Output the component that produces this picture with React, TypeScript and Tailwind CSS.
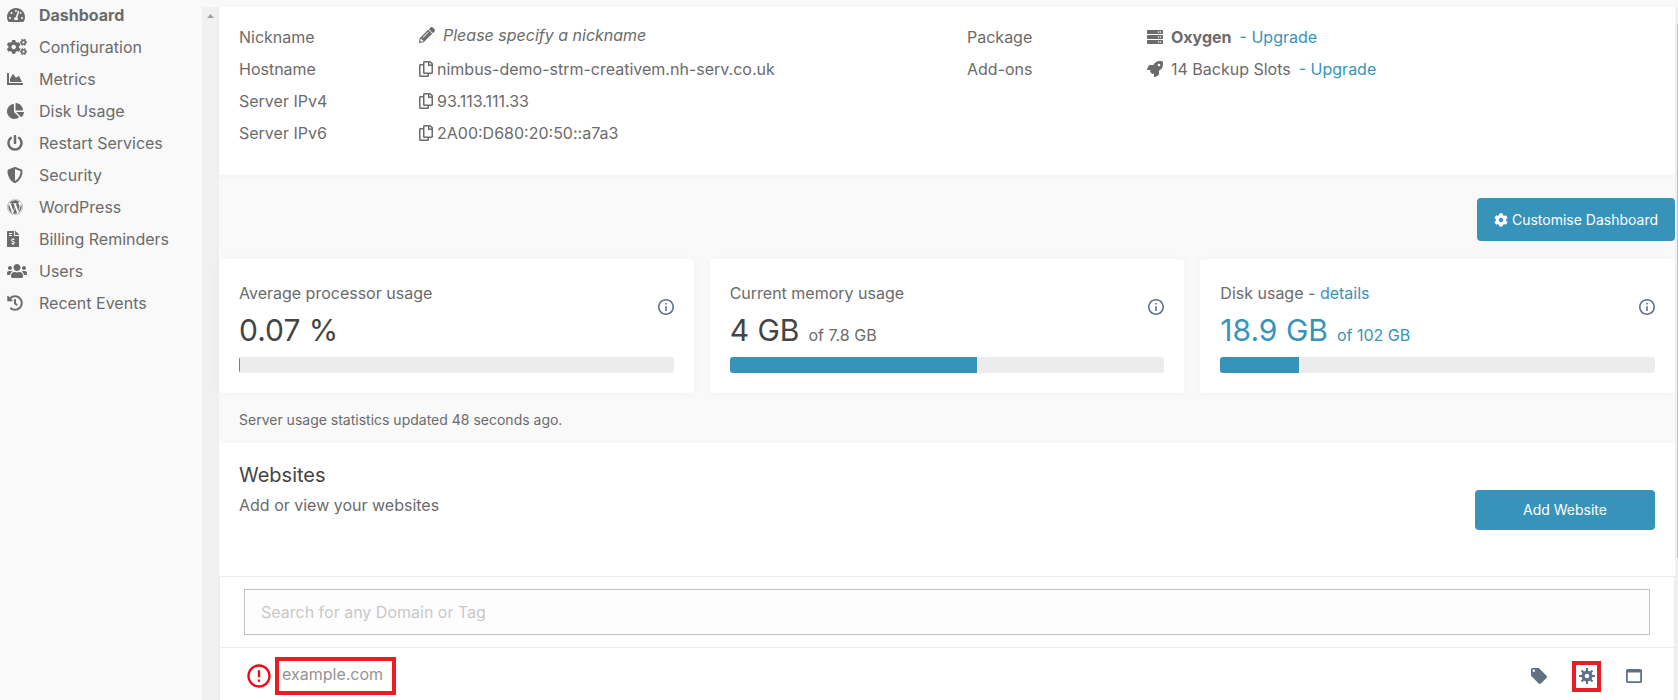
import type { ReactNode } from "react";
import type { IconType } from "react-icons";
import {
  FaChartArea,
  FaChartPie,
  FaCog,
  FaCogs,
  FaFileInvoiceDollar,
  FaHistory,
  FaPencilAlt,
  FaPowerOff,
  FaRegCopy,
  FaRocket,
  FaServer,
  FaShieldAlt,
  FaTachometerAlt,
  FaUsers,
  FaWordpress,
} from "react-icons/fa";
import { MdErrorOutline, MdInfoOutline, MdLocalOffer, MdWebAsset } from "react-icons/md";

const navItems: { label: string; icon: IconType; size: string; active?: boolean }[] = [
  { label: "Dashboard", icon: FaTachometerAlt, size: "w-[18px]", active: true },
  { label: "Configuration", icon: FaCogs, size: "w-5" },
  { label: "Metrics", icon: FaChartArea, size: "w-4" },
  { label: "Disk Usage", icon: FaChartPie, size: "w-[17px]" },
  { label: "Restart Services", icon: FaPowerOff, size: "w-4" },
  { label: "Security", icon: FaShieldAlt, size: "w-4" },
  { label: "WordPress", icon: FaWordpress, size: "w-4" },
  { label: "Billing Reminders", icon: FaFileInvoiceDollar, size: "w-3" },
  { label: "Users", icon: FaUsers, size: "w-5" },
  { label: "Recent Events", icon: FaHistory, size: "w-4" },
];

const hostDetails = [
  { label: "Hostname", value: "nimbus-demo-strm-creativem.nh-serv.co.uk" },
  { label: "Server IPv4", value: "93.113.111.33" },
  { label: "Server IPv6", value: "2A00:D680:20:50::a7a3" },
];

function Sidebar() {
  return (
    <nav className="w-[202px] shrink-0">
      <ul>
        {navItems.map(({ label, icon: Icon, size, active }) => (
          <li key={label}>
            <a href="#" className={`flex h-8 items-center pb-[2px] pl-[7px] ${active ? "font-bold" : ""}`}>
              <span className="w-8 shrink-0">
                <Icon className={`h-4 ${size}`} aria-hidden="true" />
              </span>
              {label}
            </a>
          </li>
        ))}
      </ul>
    </nav>
  );
}

function DetailRow({ label, children }: { label: string; children: ReactNode }) {
  return (
    <div className="flex h-8 items-center">
      <dt className="w-[180px] shrink-0">{label}</dt>
      <dd className="flex items-center">{children}</dd>
    </div>
  );
}

function UpgradeLink() {
  return (
    <a href="#" className="ml-2 text-[#3893bb]">
      - Upgrade
    </a>
  );
}

function ServerDetails() {
  return (
    <section className="grid grid-cols-2 bg-white pt-[14px] pb-[26px] shadow-[0_1px_4px_rgba(0,0,0,0.04)]">
      <dl className="pl-5">
        <DetailRow label="Nickname">
          <button type="button" className="flex items-center pb-1 italic">
            <FaPencilAlt className="mr-2 size-4" aria-hidden="true" />
            Please specify a nickname
          </button>
        </DetailRow>
        {hostDetails.map(({ label, value }) => (
          <DetailRow key={label} label={label}>
            <button type="button" aria-label={`Copy ${label}`} className="mr-1">
              <FaRegCopy className="h-4 w-[14px]" />
            </button>
            {value}
          </DetailRow>
        ))}
      </dl>
      <dl className="pl-5">
        <DetailRow label="Package">
          <FaServer className="mr-2 size-4" aria-hidden="true" />
          <strong className="font-bold">Oxygen</strong>
          <UpgradeLink />
        </DetailRow>
        <DetailRow label="Add-ons">
          <FaRocket className="mr-2 size-4" aria-hidden="true" />
          14 Backup Slots
          <UpgradeLink />
        </DetailRow>
      </dl>
    </section>
  );
}

type UsageCardProps = {
  title: ReactNode;
  name: string;
  value: string;
  total?: string;
  percent: number;
  highlight?: boolean;
};

function UsageCard({ title, name, value, total, percent, highlight }: UsageCardProps) {
  return (
    <section className="rounded bg-white px-5 pt-[22px] pb-5 shadow-[0_1px_8px_rgba(0,0,0,0.04)]">
      <div className="flex items-center justify-between">
        <div className={highlight ? "text-[#3893bb]" : ""}>
          <h2 className="h-6 leading-6 text-[#6b6b6b]">{title}</h2>
          <p className="flex h-[52px] items-baseline gap-[9px] leading-[50px]">
            <span className={`text-[30px] ${highlight ? "" : "text-[#444]"}`}>{value}</span>
            {total && <span>{total}</span>}
          </p>
        </div>
        <button type="button" aria-label={`About ${name}`} className="mb-6 text-[#5f7087]">
          <MdInfoOutline viewBox="2 2 20 20" className="size-4" />
        </button>
      </div>
      <div
        role="progressbar"
        aria-label={name}
        aria-valuenow={percent}
        className="h-4 overflow-hidden rounded-[3px] bg-[#ececec]"
      >
        <div className="h-full min-w-px bg-[#3893bb]" style={{ width: `${percent}%` }} />
      </div>
    </section>
  );
}

function GearIcon() {
  return (
    <svg viewBox="0 0 16 16" className="size-4" fill="none" stroke="currentColor" aria-hidden="true">
      <circle cx="8" cy="8" r="3.9" strokeWidth="3.2" />
      <path
        d="M8 0v3M8 13v3M0 8h3M13 8h3M2.5 2.5l2 2M11.5 11.5l2 2M2.5 13.5l2-2M11.5 4.5l2-2"
        strokeWidth="2.1"
      />
    </svg>
  );
}

function Websites() {
  return (
    <section className="flex grow flex-col bg-white shadow-[0_0_3px_rgba(0,0,0,0.04)]">
      <div className="flex h-[133px] items-start justify-between px-5 pt-[18px]">
        <div>
          <h2 className="text-xl leading-7 text-[#444]">Websites</h2>
          <p className="mt-1 leading-6">Add or view your websites</p>
        </div>
        <button
          type="button"
          className="mt-[29px] h-10 w-[180px] rounded bg-[#3893bb] text-sm text-white"
        >
          Add Website
        </button>
      </div>
      <div className="flex grow flex-col border border-b-0 border-[#ececec]">
        <div className="border-b border-[#ececec] px-6 py-3">
          <input
            type="text"
            aria-label="Search for any Domain or Tag"
            placeholder="Search for any Domain or Tag"
            className="block h-[46px] w-full border border-[#c2c2c2] bg-[#fdfdfd] px-4 placeholder:text-[#c8c8c8]"
          />
        </div>
        <div className="flex items-center justify-between pt-[9px] pr-8 pl-[25px]">
          <div className="flex items-center">
            <MdErrorOutline className="mr-[2px] size-7 text-[#f80012]" aria-label="Website has a problem" />
            <a
              href="#"
              className="flex h-[38px] w-[121px] items-center border-4 border-[#ed1c24] pb-1 pl-[3px] text-[#939393]"
            >
              example.com
            </a>
          </div>
          <div className="flex items-center gap-[25px] text-[#5f7087]">
            <button type="button" aria-label="Tags">
              <MdLocalOffer viewBox="2 2 20 20" className="size-4" />
            </button>
            <button
              type="button"
              aria-label="Settings"
              className="flex h-[31px] w-[29px] items-center justify-center border-4 border-[#ed1c24]"
            >
              <GearIcon />
            </button>
            <button type="button" aria-label="Open site">
              <MdWebAsset viewBox="3 3 18 18" className="size-4" />
            </button>
          </div>
        </div>
      </div>
    </section>
  );
}

export default function App() {
  return (
    <div className="flex h-screen overflow-hidden bg-[#f9f9f9] font-[Inter,sans-serif] text-base text-[#6b6b6b]">
      <Sidebar />

      {/* sidebar scroll track */}
      <div className="mt-[7px] flex w-[17px] shrink-0 justify-center bg-[#f0f0f0] pt-[7px]" aria-hidden="true">
        <svg viewBox="0 0 7 4" className="h-1 w-[7px]" fill="#a3a3a3">
          <path d="M3.5 0 7 4H0z" />
        </svg>
      </div>

      <main className="flex min-w-0 grow flex-col pt-[7px]">
        <ServerDetails />

        <div className="flex justify-end pt-[23px] pb-[18px]">
          <button
            type="button"
            className="flex h-[43px] w-[198px] items-center justify-center gap-1 rounded bg-[#3893bb] text-sm text-white"
          >
            <FaCog className="size-[14px]" aria-hidden="true" />
            Customise Dashboard
          </button>
        </div>

        <div className="grid grid-cols-3 gap-4">
          <UsageCard title="Average processor usage" name="Average processor usage" value="0.07 %" percent={0.07} />
          <UsageCard title="Current memory usage" name="Current memory usage" value="4 GB" total="of 7.8 GB" percent={57} />
          <UsageCard
            title={
              <>
                Disk usage -{" "}
                <a href="#" className="text-[#3893bb]">
                  details
                </a>
              </>
            }
            name="Disk usage"
            value="18.9 GB"
            total="of 102 GB"
            percent={18.2}
            highlight
          />
        </div>

        <p className="h-[50px] px-5 pt-[17px] text-sm leading-5">Server usage statistics updated 48 seconds ago.</p>

        <Websites />
      </main>

      {/* page scrollbar */}
      <div className="mt-[7px] flex w-[3px] shrink-0 justify-end bg-[#f0f0f0] pt-[17px]" aria-hidden="true">
        <div className="h-[79%] w-px bg-[#c1c1c1]" />
      </div>
    </div>
  );
}
